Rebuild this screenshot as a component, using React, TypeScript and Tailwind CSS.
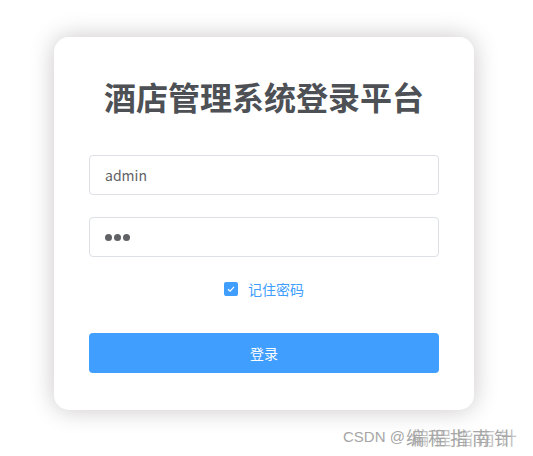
import React from "react";

const font = '"Noto Sans CJK SC", "Noto Sans", sans-serif';

export default function App() {
  return (
    <div
      className="relative w-[533px] h-[456px] bg-white overflow-hidden"
      style={{ fontFamily: font }}
    >
      <div className="pt-[37px] pl-[54px]">
        {/* Login card */}
        <div className="w-[420px] h-[373px] rounded-[15px] bg-white shadow-[0_0_25px_#cac6c6] px-[35px] pt-[37px] flex flex-col">
          <h1 className="h-[44px] leading-[44px] text-center text-[32px] font-bold text-[#4d5055]">
            酒店管理系统登录平台
          </h1>

          <div className="mt-[37px] flex flex-col gap-[22px]">
            <div className="h-[40px] rounded-[4px] border border-[#dcdfe6] flex items-center px-[15px] text-[14px] text-[#606266]">
              admin
            </div>
            <div className="h-[40px] rounded-[4px] border border-[#dcdfe6] flex items-center px-[15px] gap-[2px]">
              <span className="w-[7px] h-[7px] rounded-full bg-[#606266]" />
              <span className="w-[7px] h-[7px] rounded-full bg-[#606266]" />
              <span className="w-[7px] h-[7px] rounded-full bg-[#606266]" />
            </div>
          </div>

          {/* Remember me */}
          <div className="mt-[25px] h-[14px] flex items-center justify-center">
            <span className="w-[14px] h-[14px] rounded-[2px] bg-[#409eff] flex items-center justify-center">
              <svg width="10" height="10" viewBox="0 0 10 10" fill="none">
                <path d="M2 5.2L4.1 7.2L8 2.8" stroke="white" strokeWidth="1.2" />
              </svg>
            </span>
            <span className="ml-[10px] text-[14px] leading-[14px] text-[#409eff]">记住密码</span>
          </div>

          <button className="mt-[37px] h-[40px] w-full rounded-[4px] bg-[#409eff] text-white text-[14px]">
            登录
          </button>
        </div>
      </div>

      {/* Watermark */}
      <div className="absolute left-[343px] top-[426px] flex items-center leading-[22px] text-[#a6a6a6]">
        <span
          className="text-[15px]"
          style={{ fontFamily: '"Liberation Sans", sans-serif' }}
        >
          CSDN @
        </span>
        <span className="ml-[1px] text-[18px] tracking-[4px] [text-shadow:5px_0_0_#c4c4c4]">编程指南针</span>
      </div>
    </div>
  );
}
